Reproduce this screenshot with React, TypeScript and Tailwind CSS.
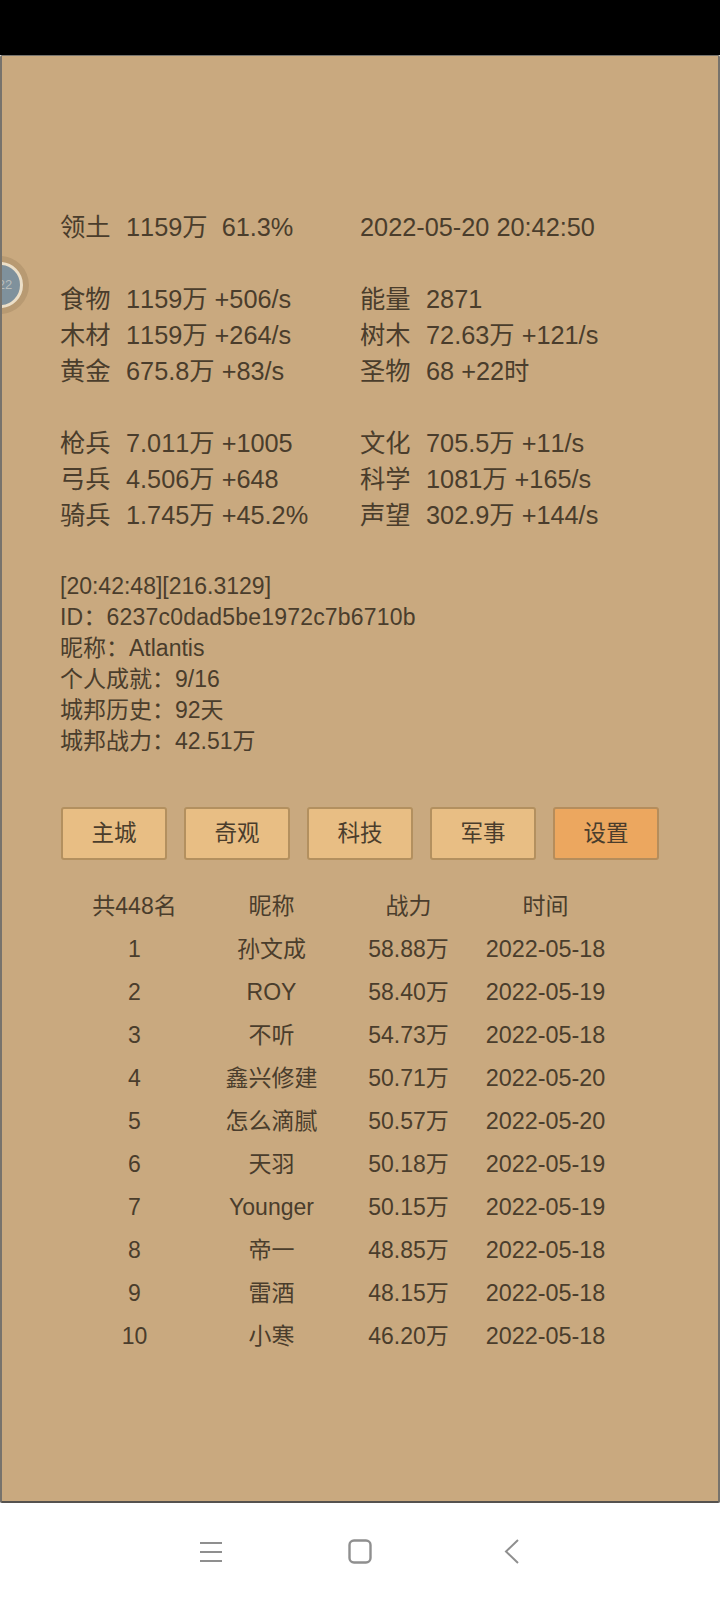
const statRows = [
  [
    ["食物", "1159万 +506/s"],
    ["能量", "2871"],
  ],
  [
    ["木材", "1159万 +264/s"],
    ["树木", "72.63万 +121/s"],
  ],
  [
    ["黄金", "675.8万 +83/s"],
    ["圣物", "68 +22时"],
  ],
];

const armyRows = [
  [
    ["枪兵", "7.011万 +1005"],
    ["文化", "705.5万 +11/s"],
  ],
  [
    ["弓兵", "4.506万 +648"],
    ["科学", "1081万 +165/s"],
  ],
  [
    ["骑兵", "1.745万 +45.2%"],
    ["声望", "302.9万 +144/s"],
  ],
];

const info = [
  "[20:42:48][216.3129]",
  "ID：6237c0dad5be1972c7b6710b",
  "昵称：Atlantis",
  "个人成就：9/16",
  "城邦历史：92天",
  "城邦战力：42.51万",
];

const tabs = ["主城", "奇观", "科技", "军事", "设置"];

const ranking = [
  ["1", "孙文成", "58.88万", "2022-05-18"],
  ["2", "ROY", "58.40万", "2022-05-19"],
  ["3", "不听", "54.73万", "2022-05-18"],
  ["4", "鑫兴修建", "50.71万", "2022-05-20"],
  ["5", "怎么滴腻", "50.57万", "2022-05-20"],
  ["6", "天羽", "50.18万", "2022-05-19"],
  ["7", "Younger", "50.15万", "2022-05-19"],
  ["8", "帝一", "48.85万", "2022-05-18"],
  ["9", "雷酒", "48.15万", "2022-05-18"],
  ["10", "小寒", "46.20万", "2022-05-18"],
];

function Stat({ label, value }: { label: string; value: string }) {
  return (
    <div className="flex">
      <span className="w-[66px]">{label}</span>
      <span>{value}</span>
    </div>
  );
}

function StatGroup({ rows }: { rows: string[][][] }) {
  return (
    <div className="text-[25.3px] leading-[36px] [font-kerning:none]">
      {rows.map((row, i) => (
        <div key={i} className="grid grid-cols-[300px_1fr]">
          <Stat label={row[0][0]} value={row[0][1]} />
          <Stat label={row[1][0]} value={row[1][1]} />
        </div>
      ))}
    </div>
  );
}

export default function App() {
  return (
    <div className="flex h-[1600px] w-[720px] flex-col bg-white font-['Liberation_Sans','Noto_Sans_CJK_SC',sans-serif] text-[#4a3d2c]">
      <div className="h-[55px] bg-black" />

      {/* game panel */}
      <div className="relative h-[1448px] overflow-hidden rounded-[2px] border-x-2 border-t border-b-2 border-x-[#77736c] border-t-[#77736c] border-b-[#55524f] bg-[#c9a97f] pl-[58px] pt-[153px]">
        <div className="absolute left-[-31px] top-[200px] flex h-[58px] w-[58px] items-center justify-center rounded-full bg-[#b89a72]">
          <div className="flex h-[46px] w-[46px] items-center justify-center rounded-full border-[3px] border-[#ecdfc8] bg-[#7f919c] pl-[10px] text-[13px] text-[#b9bdbb]">
            22
          </div>
        </div>

        <div className="grid grid-cols-[300px_1fr] text-[25.3px] leading-[36px] [font-kerning:none]">
          <div className="flex">
            <span className="w-[66px]">领土</span>
            <span>1159万&nbsp;&nbsp;61.3%</span>
          </div>
          <div>2022-05-20 20:42:50</div>
        </div>

        <div className="mt-[36px]">
          <StatGroup rows={statRows} />
        </div>
        <div className="mt-[36px]">
          <StatGroup rows={armyRows} />
        </div>

        <div className="mt-[38px] text-[23px] leading-[31px]">
          {info.map((line) => (
            <div key={line} className={line.startsWith("ID") ? "tracking-[0.2px]" : ""}>
              {line}
            </div>
          ))}
        </div>

        <div className="mt-[50px] ml-px flex gap-[17px]">
          {tabs.map((tab) => (
            <div
              key={tab}
              className={
                tab === "设置"
                  ? "flex h-[53px] w-[106px] items-center justify-center rounded-[3px] border-2 border-[#b58d5c] bg-[#eca75f] text-[22.5px]"
                  : "flex h-[53px] w-[106px] items-center justify-center rounded-[3px] border-2 border-[#b3905f] bg-[#e8be84] text-[22.5px]"
              }
            >
              {tab}
            </div>
          ))}
        </div>

        <div className="mt-[25px] ml-[6px] w-[548px] text-center text-[23px]">
          <div className="grid h-[43px] grid-cols-4 items-center">
            <div>共448名</div>
            <div>昵称</div>
            <div>战力</div>
            <div>时间</div>
          </div>
          {ranking.map((row) => (
            <div key={row[0]} className="grid h-[43px] grid-cols-4 items-center">
              {row.map((cell, i) => (
                <div key={i} className={i === 3 ? "text-[23.4px]" : ""}>
                  {cell}
                </div>
              ))}
            </div>
          ))}
        </div>
      </div>

      {/* android nav bar */}
      <div className="flex-1 bg-white pl-[200px] pt-[36px]">
        <div className="flex h-[25px] items-center">
          <svg width="22" height="20" viewBox="0 0 22 20" fill="none" stroke="#8f8f8f" strokeWidth="2">
            <path d="M0 1h22M0 10h22M0 19h22" />
          </svg>
          <svg className="ml-[126px]" width="24" height="25" viewBox="0 0 24 25" fill="none" stroke="#8f8f8f" strokeWidth="2.4">
            <rect x="1.5" y="1.5" width="21" height="22" rx="4.5" />
          </svg>
          <svg className="ml-[132px]" width="15" height="25" viewBox="0 0 15 25" fill="none" stroke="#8f8f8f" strokeWidth="2">
            <path d="M14 1 2 12.5 14 24" />
          </svg>
        </div>
      </div>
    </div>
  );
}
